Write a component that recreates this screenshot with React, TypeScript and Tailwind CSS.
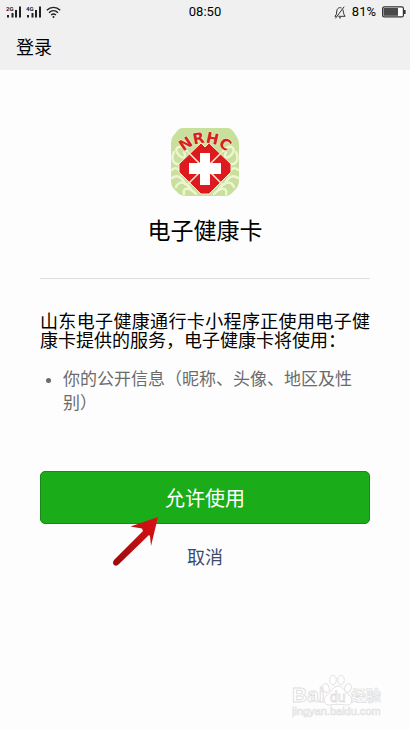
function Signal({ label }: { label: string }) {
  return (
    <svg width="16" height="14" viewBox="0 0 16 14" aria-label={label}>
      <text x="0" y="6" fontSize="6" fontWeight="700" fill="#222" fontFamily="Roboto, sans-serif">{label}</text>
      <path d="M2 10v2.500M6.500 8v4.500M10 5v7.500M14 1.500v11" stroke="#222" strokeWidth="2" />
    </svg>
  );
}

function Wifi() {
  return (
    <svg width="15" height="13" viewBox="0 0 15 13" fill="none" stroke="#222" strokeWidth="1.4" aria-hidden="true">
      <path d="M.8 4.3C4.6.4 10.4.4 14.2 4.3M3 6.8c2.7-2.7 6.3-2.7 9 0M5.1 9.1c1.4-1.3 3.4-1.3 4.8 0" />
      <circle cx="7.5" cy="11" r="1" fill="#222" stroke="none" />
    </svg>
  );
}

function MutedBell() {
  return (
    <svg width="12" height="13" viewBox="0 0 12 13" fill="none" stroke="#333" strokeWidth="1" aria-hidden="true">
      <path d="M7.6 2C5 .9 3 2.500 2.800 5L2.300 8.500.900 10.300H2.500M8.800 3.500c.7 1.900.4 4.500 2.300 6.800H4.300M5 11.800h2M10.200.7L1.400 12.400" />
    </svg>
  );
}

function Battery() {
  return (
    <svg width="24" height="12" viewBox="0 0 24 12" aria-hidden="true">
      <rect x=".6" y=".9" width="20.800" height="10" rx="1.500" fill="#fff" stroke="#333" strokeWidth="1.200" />
      <rect x="1.500" y="2" width="14.500" height="7.800" fill="#4a4a4a" />
      <path d="M22.700 4v4" stroke="#333" strokeWidth="1.800" />
    </svg>
  );
}

function HealthLogo() {
  return (
    <svg className="overflow-visible" width="68" height="68" viewBox="0 0 68 68" role="img" aria-label="NRHC">
      <defs>
        <path id="arc" d="M8 30A30 30 0 0 1 60 30" />
      </defs>
      <path d="M11 0H57Q60 0 62 3L66 9Q68 12 68 16V53Q68 58 64 62L60 66Q58 68 54 68H15Q11 68 8 66L3 61Q0 58 0 53V15Q0 11 2 8L7 2Q9 0 11 0Z" fill="#c9df9c" />
      <g fill="none" stroke="#eef5d4" strokeWidth="2.400" strokeLinecap="round">
        <path d="M16 23C9 15 2 20 7 26S16 30 13 24M3 24C-1 33 4 37 9 36M1 42C4 38 9 41 11 47M1 50C6 46 11 49 14 56M5 59C8 52 15 54 20 61M13 66C11 60 18 58 25 66" />
        <path d="M52 23C59 15 66 20 61 26S52 30 55 24M65 24C69 33 64 37 59 36M67 42C64 38 59 41 57 47M67 50C62 46 57 49 54 56M63 59C60 52 53 54 48 61M55 66C57 60 50 58 43 66" />
      </g>
      <path d="M30 15L34 19L38 15L60 36V44L38 66H30L8 44V36Z" fill="#dc1a1f" stroke="#f3efcd" strokeWidth="1" />
      <path d="M17 24L29 36M51 24L39 36M17 56L29 44M51 56L39 44" stroke="#f6eccb" strokeWidth="1.500" />
      <path d="M29 25H39V35H50V46H39V57H29V46H18V35H29Z" fill="#fff" />
      <text fontSize="15" fontWeight="700" fill="#d8201f" stroke="#e4edbd" strokeWidth="1.500" paintOrder="stroke" fontFamily="DejaVu Sans, sans-serif" textAnchor="middle">
        <textPath href="#arc" startOffset="50%">NRHC</textPath>
      </text>
    </svg>
  );
}

function Arrow() {
  return (
    <svg className="pointer-events-none absolute top-[46px] left-[71px]" width="50" height="52" viewBox="0 0 50 52" aria-hidden="true">
      <defs>
        <linearGradient id="red" x1="1" y1="0" x2="0" y2="1">
          <stop offset="0" stopColor="#dc1115" />
          <stop offset="1" stopColor="#9c0b0e" />
        </linearGradient>
      </defs>
      <path d="M47 0L19.500 9.500L31 11.500L32 14L3 43Q1 46 3 48Q5.500 50 8 47L38 18L39 19L40 29Z" fill="url(#red)" />
    </svg>
  );
}

function Watermark() {
  return (
    <svg className="absolute right-6 bottom-2" width="94" height="48" viewBox="0 0 94 48" role="img" aria-label="Baidu 经验">
      <g fill="#fff" stroke="#dedede" strokeWidth=".9">
        <text x="0" y="28" fontSize="21" fontWeight="700" fontFamily="Liberation Sans, sans-serif">Bai</text>
        <path d="M46 12C41 12 40 18 35 21C30 25 32 32 38 31C43 30 49 30 54 31C60 32 62 25 57 21C52 18 51 12 46 12Z" />
        <ellipse cx="34" cy="14" rx="3.200" ry="4.500" transform="rotate(-15 34 14)" />
        <ellipse cx="41" cy="6" rx="3.200" ry="4.500" />
        <ellipse cx="49" cy="6" rx="3.200" ry="4.500" />
        <ellipse cx="56" cy="14" rx="3.200" ry="4.500" transform="rotate(15 56 14)" />
        <text x="38" y="28" fontSize="14" strokeWidth=".8" fontFamily="Liberation Sans, sans-serif">du</text>
        <text x="59" y="27" fontSize="15" fontWeight="700" strokeWidth=".7" fontFamily="Noto Sans CJK SC, sans-serif">经验</text>
      </g>
      <text x="0" y="41" fontSize="11" fill="#fff" stroke="#e2e2e2" strokeWidth=".7" fontFamily="Liberation Sans, sans-serif">jingyan.baidu.com</text>
    </svg>
  );
}

export default function App() {
  return (
    <div lang="zh-CN" className="relative min-h-screen bg-[#fdfdfd] font-[Roboto,'Noto_Sans_CJK_SC',sans-serif] text-black">
      <header className="bg-[#f0f0f0]">
        <div className="grid h-6 grid-cols-3 items-center px-1 text-[13px]">
          <div className="flex items-center gap-1 pl-[2px]">
            <Signal label="2G" />
            <Signal label="4G" />
            <Wifi />
          </div>
          <time className="text-center">08:50</time>
          <div className="flex items-center justify-end gap-[6px]">
            <MutedBell />
            <span>81%</span>
            <Battery />
          </div>
        </div>
        <h1 className="flex h-[46px] items-center px-4 text-[18px]">登录</h1>
      </header>

      <main className="px-10">
        <section className="flex flex-col items-center border-b border-[#dedede] pt-[58px] pb-[30px]">
          <HealthLogo />
          <h2 className="mt-5 text-[23px] leading-8">电子健康卡</h2>
        </section>

        <p className="mt-[33px] text-justify text-[18px] leading-[19px]">
          山东电子健康通行卡小程序正使用电子健康卡提供的服务，电子健康卡将使用：
        </p>
        <ul className="mt-[17px] list-disc pr-3 pl-[23px] text-[17px] leading-6 text-[#6b6b6b]">
          <li>你的公开信息（昵称、头像、地区及性别）</li>
        </ul>

        <div className="relative mt-14">
          <button type="button" className="h-[53px] w-full rounded-[5px] border border-[#16891a] bg-[#1aad19] pt-[2px] text-[20px] text-white">
            允许使用
          </button>
          <Arrow />
        </div>
        <button type="button" className="mx-auto mt-[18px] block text-[18px] leading-8 text-[#3b4c72]">
          取消
        </button>
      </main>
      <Watermark />
    </div>
  );
}
